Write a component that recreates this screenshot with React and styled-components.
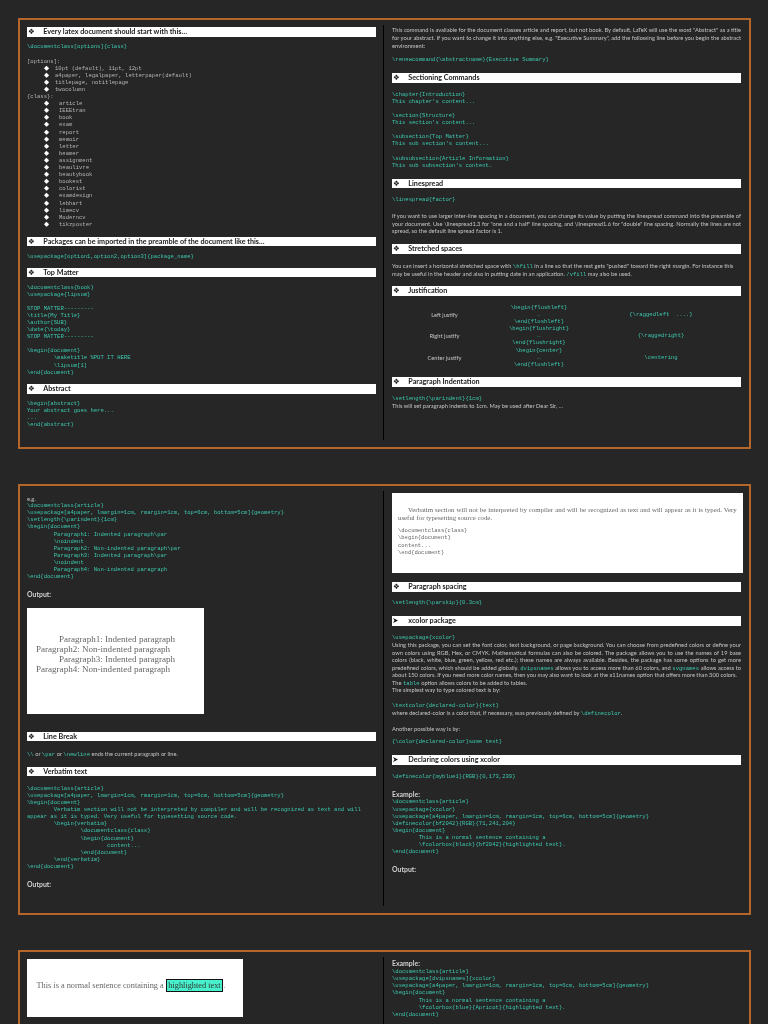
import React from 'react';
import styled, { createGlobalStyle, css } from 'styled-components';

const Global = createGlobalStyle`
  html, body { margin: 0; padding: 0; background: #262626; overflow: hidden; }
`;

const flowGap = css`
  margin: ${(p) => p.$mt ?? 0}px 0 0;
`;

const Stage = styled.div`
  height: 1024px;
  overflow: hidden;
  padding: 18px 0 0 18px;
  box-sizing: border-box;
  display: flex;
  flex-direction: column;
  gap: 35px;
  background: #262626;
  filter: blur(0.35px);
`;

const Page = styled.section`
  flex: none;
  width: 733px;
  height: 431px;
  box-sizing: border-box;
  border: 2px solid #b5662a;
  display: grid;
  grid-template-columns: 364px 365px;
`;

const Column = styled.div`
  margin: 5px 0 7px;
  box-sizing: border-box;
  overflow: visible;
  padding: ${(p) => (p.$side === 'left' ? '2.3px 7px 0 7px' : '1.1px 8px 0 8px')};
  border-right: ${(p) => (p.$side === 'left' ? '1px solid #000' : '0')};
`;

const BarBox = styled.div`
  ${flowGap}
  height: 9.3px;
  background: #fff;
  display: flex;
  align-items: center;
  color: #1a1a1a;
  font: 700 7.2px/9.3px Lato, sans-serif;
`;

const BarIcon = styled.span`
  flex: none;
  width: 16.3px;
  padding-left: 1px;
  box-sizing: border-box;
  display: flex;
  align-items: center;
  font: 400 7.5px/9.3px "DejaVu Sans", sans-serif;
  color: #222;
`;

const Code = styled.pre`
  ${flowGap}
  font: 400 5.57px/7.1px "Liberation Mono", monospace;
  color: ${(p) => (p.$plain ? '#b4b4b4' : '#3cc8ae')};
  white-space: pre;
`;

const Para = styled.p`
  ${flowGap}
  font: 400 5.72px/${(p) => p.$lh ?? 7.7}px Lato, sans-serif;
  color: #c4c4c4;
  text-align: ${(p) => (p.$just ? 'justify' : 'left')};
`;

const Mono = styled.span`
  font: 400 5.57px/1 "Liberation Mono", monospace;
  color: #3cc8ae;
`;

const Label = styled.p`
  ${flowGap}
  font: 700 6.9px/7.1px Lato, sans-serif;
  color: #d0d0d0;
`;

const List = styled.ul`
  margin: 0;
  padding: 0 0 0 17px;
  list-style: none;
`;

const ListItem = styled.li`
  display: flex;
  font: 400 5.57px/7.1px "Liberation Mono", monospace;
  color: #b4b4b4;
  white-space: pre;
`;

const Diamond = styled.span`
  flex: none;
  width: ${(p) => p.$w}px;
  font: 400 6.6px/7.1px "DejaVu Sans", sans-serif;
  color: #fff;
`;

const Table = styled.div`
  ${flowGap}
  display: grid;
  grid-template-columns: 105px 84px 160px;
  grid-auto-rows: 21.3px;
  align-items: center;
  text-align: center;
`;

const CellText = styled.span`
  font: 400 5.72px/7.1px Lato, sans-serif;
  color: #c4c4c4;
`;

const CellCode = styled.pre`
  margin: 0;
  font: 400 5.57px/7.1px "Liberation Mono", monospace;
  color: #3cc8ae;
  white-space: pre;
`;

const Shot = styled.div`
  ${flowGap}
  width: ${(p) => p.$w}px;
  height: ${(p) => p.$h}px;
  background: #fff;
  box-sizing: border-box;
  padding: ${(p) => p.$pad};
  color: #666;
  font-family: "Liberation Serif", serif;
`;

const ShotLine = styled.div`
  font-size: 9.05px;
  line-height: 9.8px;
  white-space: pre;
  padding-left: ${(p) => (p.$indent ? 23 : 0)}px;
`;

const ShotPara = styled.div`
  font-size: 6.85px;
  line-height: 8px;
  text-indent: 10px;
  text-align: justify;
`;

const ShotMono = styled.pre`
  margin: 5px 0 0;
  font: 400 5.5px/7.5px "Liberation Mono", monospace;
  color: #666;
`;

const ShotSentence = styled.div`
  font-size: 8.3px;
  line-height: 12px;
  white-space: pre;
`;

const Highlight = styled.span`
  display: inline-block;
  background: #47f1cc;
  border: 0.8px solid #111;
  padding: 0 1.6px;
  color: #333;
  line-height: 11px;
`;

const Arrow = () => (
  <svg width="5" height="5" viewBox="0 0 10 10" aria-hidden="true">
    <path d="M0 0 L10 5 L0 10 L3 5 Z" fill="#111" />
  </svg>
);

const Bar = ({ mt, icon = '❖', children }) => (
  <BarBox $mt={mt}>
    <BarIcon>{icon}</BarIcon>
    {children}
  </BarBox>
);

const Bullets = ({ items, w }) => (
  <List>
    {items.map((t) => (
      <ListItem key={t}>
        <Diamond $w={w}>◆</Diamond>
        {t}
      </ListItem>
    ))}
  </List>
);

const options = ['10pt (default), 11pt, 12pt', 'a4paper, legalpaper, letterpaper(default)', 'titlepage, notitlepage', 'twocolumn'];
const classes = ['article', 'IEEEtran', 'book', 'exam', 'report', 'memoir', 'letter', 'beamer', 'assignment', 'beaulivre', 'beautybook', 'bookest', 'colorist', 'examdesign', 'lebhart', 'limecv', 'Moderncv', 'tikzposter'];

const justify = [
  ['Left justify', '\\begin{flushleft}\n…\n\\end{flushleft}', '{\\raggedleft  ....}'],
  ['Right justify', '\\begin{flushright}\n…\n\\end{flushright}', '{\\raggedright}'],
  ['Center justify', '\\begin{center}\n…\n\\end{flushleft}', '\\centering'],
];

export default function App() {
  return (
    <Stage>
      <Global />
      <Page>
        <Column $side="left">
          <Bar>Every latex document should start with this…</Bar>
          <Code $mt={6.85}>{'\\documentclass[options]{class}\n '}</Code>
          <Code $plain>{'[options]:'}</Code>
          <Bullets items={options} w={11} />
          <Code $plain>{'{class}:'}</Code>
          <Bullets items={classes} w={15} />
          <Bar mt={9.25}>Packages can be imported in the preamble of the document like this…</Bar>
          <Code $mt={6.85}>{'\\usepackage[option1,option2,option3]{package_name}'}</Code>
          <Bar mt={7.45}>Top Matter</Bar>
          <Code $mt={6.45}>{`\\documentclass{book}
\\usepackage{lipsum}

%TOP MATTER---------
\\title{My Title}
\\author{SUB}
\\date{\\today}
%TOP MATTER---------

\\begin{document}
        \\maketitle %PUT IT HERE
        \\lipsum[1]
\\end{document}`}</Code>
          <Bar mt={8.55}>Abstract</Bar>
          <Code $mt={6.55}>{`\\begin{abstract}
Your abstract goes here...
...
\\end{abstract}`}</Code>
        </Column>
        <Column $side="right">
          <Para $just>
            This command is available for the document classes article and report, but not book. By default, LaTeX will use the word "Abstract" as a title for your abstract. If you want to change it into anything else, e.g. "Executive Summary", add the following line before you begin the abstract environment:
          </Para>
          <Code $mt={7.25}>{'\\renewcommand{\\abstractname}{Executive Summary}'}</Code>
          <Bar mt={9.75}>Sectioning Commands</Bar>
          <Code $mt={8.15}>{`\\chapter{Introduction}
This chapter's content...

\\section{Structure}
This section's content...

\\subsection{Top Matter}
This sub section's content...

\\subsubsection{Article Information}
This sub subsection's content…`}</Code>
          <Bar mt={9.75}>Linespread</Bar>
          <Code $mt={8.55}>{'\\linespread{factor}'}</Code>
          <Para $mt={8.6} $just>
            If you want to use larger inter-line spacing in a document, you can change its value by putting the linespread command into the preamble of your document. Use \linespread{1.3} for "one and a half" line spacing, and \linespread{1.6} for "double" line spacing. Normally the lines are not spread, so the default line spread factor is 1.
          </Para>
          <Bar mt={9.05}>Stretched spaces</Bar>
          <Para $mt={8.55}>
            You can insert a horizontal stretched space with <Mono> \hfill</Mono> in a line so that the rest gets "pushed" toward the right margin. For instance this may be useful in the header and also in putting date in an application. <Mono> /vfill</Mono> may also be used.
          </Para>
          <Bar mt={8.75}>Justification</Bar>
          <Table $mt={8.45}>
            {justify.map(([a, b, c]) => (
              <React.Fragment key={a}>
                <CellText>{a}</CellText>
                <CellCode>{b}</CellCode>
                <CellCode>{c}</CellCode>
              </React.Fragment>
            ))}
          </Table>
          <Bar mt={9.6}>Paragraph Indentation</Bar>
          <Code $mt={8.55}>{'\\setlength{\\parindent}{1cm}'}</Code>
          <Para $lh={7.1}>This will set paragraph indents to 1cm. May be used after Dear Sir, …</Para>
        </Column>
      </Page>

      <Page>
        <Column $side="left">
          <Para $mt={1.8} $lh={7.1}>e.g.</Para>
          <Code>{`\\documentclass{article}
\\usepackage[a4paper, lmargin=1cm, rmargin=1cm, top=6cm, bottom=5cm]{geometry}
\\setlength{\\parindent}{1cm}
\\begin{document}
        Paragraph1: Indented paragraph\\par
        \\noindent
        Paragraph2: Non-indented paragraph\\par
        Paragraph3: Indented paragraph\\par
        \\noindent
        Paragraph4: Non-indented paragraph
\\end{document}`}</Code>
          <Label $mt={11}>Output:</Label>
          <Shot $mt={10} $w={177} $h={105.4} $pad="26.8px 0 0 9px">
            <ShotLine $indent>Paragraph1: Indented paragraph</ShotLine>
            <ShotLine>Paragraph2: Non-indented paragraph</ShotLine>
            <ShotLine $indent>Paragraph3: Indented paragraph</ShotLine>
            <ShotLine>Paragraph4: Non-indented paragraph</ShotLine>
          </Shot>
          <Bar mt={18}>Line Break</Bar>
          <Para $mt={8.75} $lh={7.1}>
            <Mono>\\</Mono> or <Mono>\par</Mono> or <Mono>\newline</Mono> ends the current paragraph or line.
          </Para>
          <Bar mt={9.45}>Verbatim text</Bar>
          <Code $mt={8.85}>{`\\documentclass{article}
\\usepackage[a4paper, lmargin=1cm, rmargin=1cm, top=6cm, bottom=5cm]{geometry}
\\begin{document}
        Verbatim section will not be interpreted by compiler and will be recognized as text and will
appear as it is typed. Very useful for typesetting source code.
        \\begin{verbatim}
                \\documentclass{class}
                \\begin{document}
                        content...
                \\end{document}
        \\end{verbatim}
\\end{document}`}</Code>
          <Label $mt={10.8}>Output:</Label>
        </Column>
        <Column $side="right">
          <Shot $mt={1.2} $w={350.7} $h={80} $pad="12.7px 6px 0 6px">
            <ShotPara>Verbatim section will not be interpreted by compiler and will be recognized as text and will appear as it is typed. Very useful for typesetting source code.</ShotPara>
            <ShotMono>{`\\documentclass{class}
\\begin{document}
content...
\\end{document}`}</ShotMono>
          </Shot>
          <Bar mt={9}>Paragraph spacing</Bar>
          <Code $mt={7.85}>{'\\setlength{\\parskip}{0.3cm}'}</Code>
          <Bar mt={9.75} icon={<Arrow />}>xcolor package</Bar>
          <Code $mt={8.55}>{'\\usepackage{xcolor}'}</Code>
          <Para $lh={7.43} $just>
            Using this package, you can set the font color, text background, or page background. You can choose from predefined colors or define your own colors using RGB, Hex, or CMYK. Mathematical formulas can also be colored. The package allows you to use the names of 19 base colors (black, white, blue, green, yellow, red etc.); these names are always available. Besides, the package has some options to get more predefined colors, which should be added globally. <Mono>dvipsnames</Mono> allows you to access more than 60 colors, and <Mono>svgnames</Mono> allows access to about 150 colors. If you need more color names, then you may also want to look at the x11names option that offers more than 300 colors.<br />
            The <Mono>table</Mono> option allows colors to be added to tables.<br />
            The simplest way to type colored text is by:
          </Para>
          <Code $mt={8.45}>{'\\textcolor{declared-color}{text}'}</Code>
          <Para $lh={7.1}>where declared-color is a color that, if necessary, was previously defined by <Mono>\definecolor</Mono>.</Para>
          <Para $mt={8.2} $lh={7.1}>Another possible way is by:</Para>
          <Code $mt={6.6}>{'{\\color{declared-color}some text}'}</Code>
          <Bar mt={9.75} icon={<Arrow />}>Declaring colors using xcolor</Bar>
          <Code $mt={8.55}>{'\\definecolor{myblue1}{RGB}{0,173,239}'}</Code>
          <Label $mt={10.5}>Example:</Label>
          <Code $mt={0.6}>{`\\documentclass{article}
\\usepackage{xcolor}
\\usepackage[a4paper, lmargin=1cm, rmargin=1cm, top=6cm, bottom=5cm]{geometry}
\\definecolor{bf2042}{RGB}{71,241,204}
\\begin{document}
        This is a normal sentence containing a
        \\fcolorbox{black}{bf2042}{highlighted text}.
\\end{document}`}</Code>
          <Label $mt={10.9}>Output:</Label>
        </Column>
      </Page>

      <Page>
        <Column $side="left">
          <Shot $w={216} $h={58} $pad="19.5px 0 0 9.5px">
            <ShotSentence>This is a normal sentence containing a <Highlight>highlighted text</Highlight>.</ShotSentence>
          </Shot>
        </Column>
        <Column $side="right">
          <Label $mt={2.35}>Example:</Label>
          <Code $mt={0.6}>{`\\documentclass{article}
\\usepackage[dvipsnames]{xcolor}
\\usepackage[a4paper, lmargin=1cm, rmargin=1cm, top=6cm, bottom=5cm]{geometry}
\\begin{document}
        This is a normal sentence containing a
        \\fcolorbox{blue}{Apricot}{highlighted text}.
\\end{document}`}</Code>
        </Column>
      </Page>
    </Stage>
  );
}
